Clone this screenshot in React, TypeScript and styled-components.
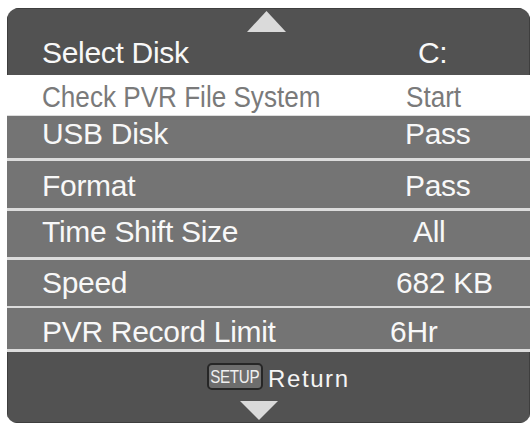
import React from 'react';
import styled, { createGlobalStyle } from 'styled-components';

const Global = createGlobalStyle`
  html, body { margin: 0; padding: 0; background: #ffffff; }
  body { font-family: "Liberation Sans", Arial, Helvetica, sans-serif; }
`;

const Panel = styled.div`
  margin: 8px 0 0 7px;
  width: 523px;
  height: 415px;
  border-radius: 12px 12px 10px 10px;
  overflow: hidden;
  display: flex;
  flex-direction: column;
  background: #dcdcdc;
`;

const Header = styled.div`
  height: 67px;
  box-sizing: border-box;
  background: #525252;
  padding-top: 3px;
  display: flex;
  flex-direction: column;
  box-shadow: inset 1px 1px 0 #3e3e3e, inset -1px 0 0 #3e3e3e;
`;

const ArrowBox = styled.div<{ $left: number; $top?: number }>`
  margin-left: ${(p) => p.$left}px;
  margin-top: ${(p) => p.$top ?? 0}px;
  line-height: 0;
`;

const Row = styled.div<{ $h: number; $pt: number; $sep: number; $light?: boolean }>`
  box-sizing: border-box;
  height: ${(p) => p.$h + p.$sep}px;
  padding-top: ${(p) => p.$pt}px;
  border-top: ${(p) => p.$sep}px solid #dcdcdc;
  background: ${(p) => (p.$light ? '#ffffff' : '#747474')};
  display: flex;
  align-items: flex-start;
`;

const Label = styled.div<{ $light?: boolean }>`
  flex: 0 0 350px;
  box-sizing: border-box;
  padding-left: 35px;
  white-space: nowrap;
  height: 32px;
  line-height: 32px;
  font-size: ${(p) => (p.$light ? 29 : 30)}px;
  letter-spacing: ${(p) => (p.$light ? 0 : -0.3)}px;
  color: ${(p) => (p.$light ? '#7a7a7a' : '#f8f8f8')};
`;

const Value = styled(Label)<{ $x: number }>`
  flex: 0 0 auto;
  padding-left: ${(p) => p.$x - 350}px;
`;

const Narrow = styled.span`
  display: inline-block;
  transform: scaleX(0.9);
  transform-origin: left center;
`;

const Footer = styled.div`
  flex: 1;
  box-sizing: border-box;
  border-top: 3px solid #dcdcdc;
  background: #525252;
  padding-top: 11px;
  display: flex;
  flex-direction: column;
  box-shadow: inset 1px -1px 0 #3e3e3e, inset -1px 0 0 #3e3e3e;
`;

const HintLine = styled.div`
  margin-left: 200px;
  height: 27px;
  display: flex;
  align-items: center;
`;

const KeyBadge = styled.div`
  box-sizing: border-box;
  width: 56px;
  height: 27px;
  border: 2.5px solid #262626;
  border-radius: 5px;
  background: #6d6d6d;
  display: flex;
  align-items: center;
  justify-content: center;
  overflow: hidden;
`;

const KeyText = styled.span`
  display: inline-block;
  font-size: 19px;
  line-height: 19px;
  color: #f0f0f0;
  letter-spacing: -0.4px;
  transform: scaleX(0.8);
  white-space: nowrap;
`;

const HintText = styled.span`
  margin-left: 5px;
  margin-top: 5px;
  font-size: 24px;
  line-height: 26px;
  letter-spacing: 1.6px;
  color: #f5f5f5;
`;

const UpArrow = () => (
  <svg width="39" height="21" viewBox="0 0 39 21">
    <polygon points="19.5,0 39,21 0,21" fill="#dadada" />
  </svg>
);

const DownArrow = () => (
  <svg width="38" height="19" viewBox="0 0 38 19">
    <polygon points="0,0 38,0 19,19" fill="#dadada" />
  </svg>
);

const rows = [
  { label: 'USB Disk', value: 'Pass', x: 398, h: 42, pt: 2, sep: 1 },
  { label: 'Format', value: 'Pass', x: 398, h: 47, pt: 9, sep: 3 },
  { label: 'Time Shift Size', value: 'All', x: 406, h: 46, pt: 5, sep: 3 },
  { label: 'Speed', value: '682 KB', x: 389, h: 46, pt: 7, sep: 3 },
  { label: 'PVR Record Limit', value: '6Hr', x: 383, h: 41, pt: 8, sep: 2 },
];

export default function App() {
  return (
    <>
      <Global />
      <Panel>
        <Header>
          <ArrowBox $left={240}>
            <UpArrow />
          </ArrowBox>
          <Row $h={32} $pt={0} $sep={0} style={{ background: 'transparent', marginTop: 5 }}>
            <Label>Select Disk</Label>
            <Value $x={411}>C:</Value>
          </Row>
        </Header>
        <Row $h={40} $pt={6} $sep={0} $light>
          <Label $light>
            <Narrow>Check PVR File System</Narrow>
          </Label>
          <Value $light $x={399}>
            <Narrow>Start</Narrow>
          </Value>
        </Row>
        {rows.map((r) => (
          <Row key={r.label} $h={r.h} $pt={r.pt} $sep={r.sep}>
            <Label>{r.label}</Label>
            <Value $x={r.x}>{r.value}</Value>
          </Row>
        ))}
        <Footer>
          <HintLine>
            <KeyBadge>
              <KeyText>SETUP</KeyText>
            </KeyBadge>
            <HintText>Return</HintText>
          </HintLine>
          <ArrowBox $left={233} $top={11}>
            <DownArrow />
          </ArrowBox>
        </Footer>
      </Panel>
    </>
  );
}
